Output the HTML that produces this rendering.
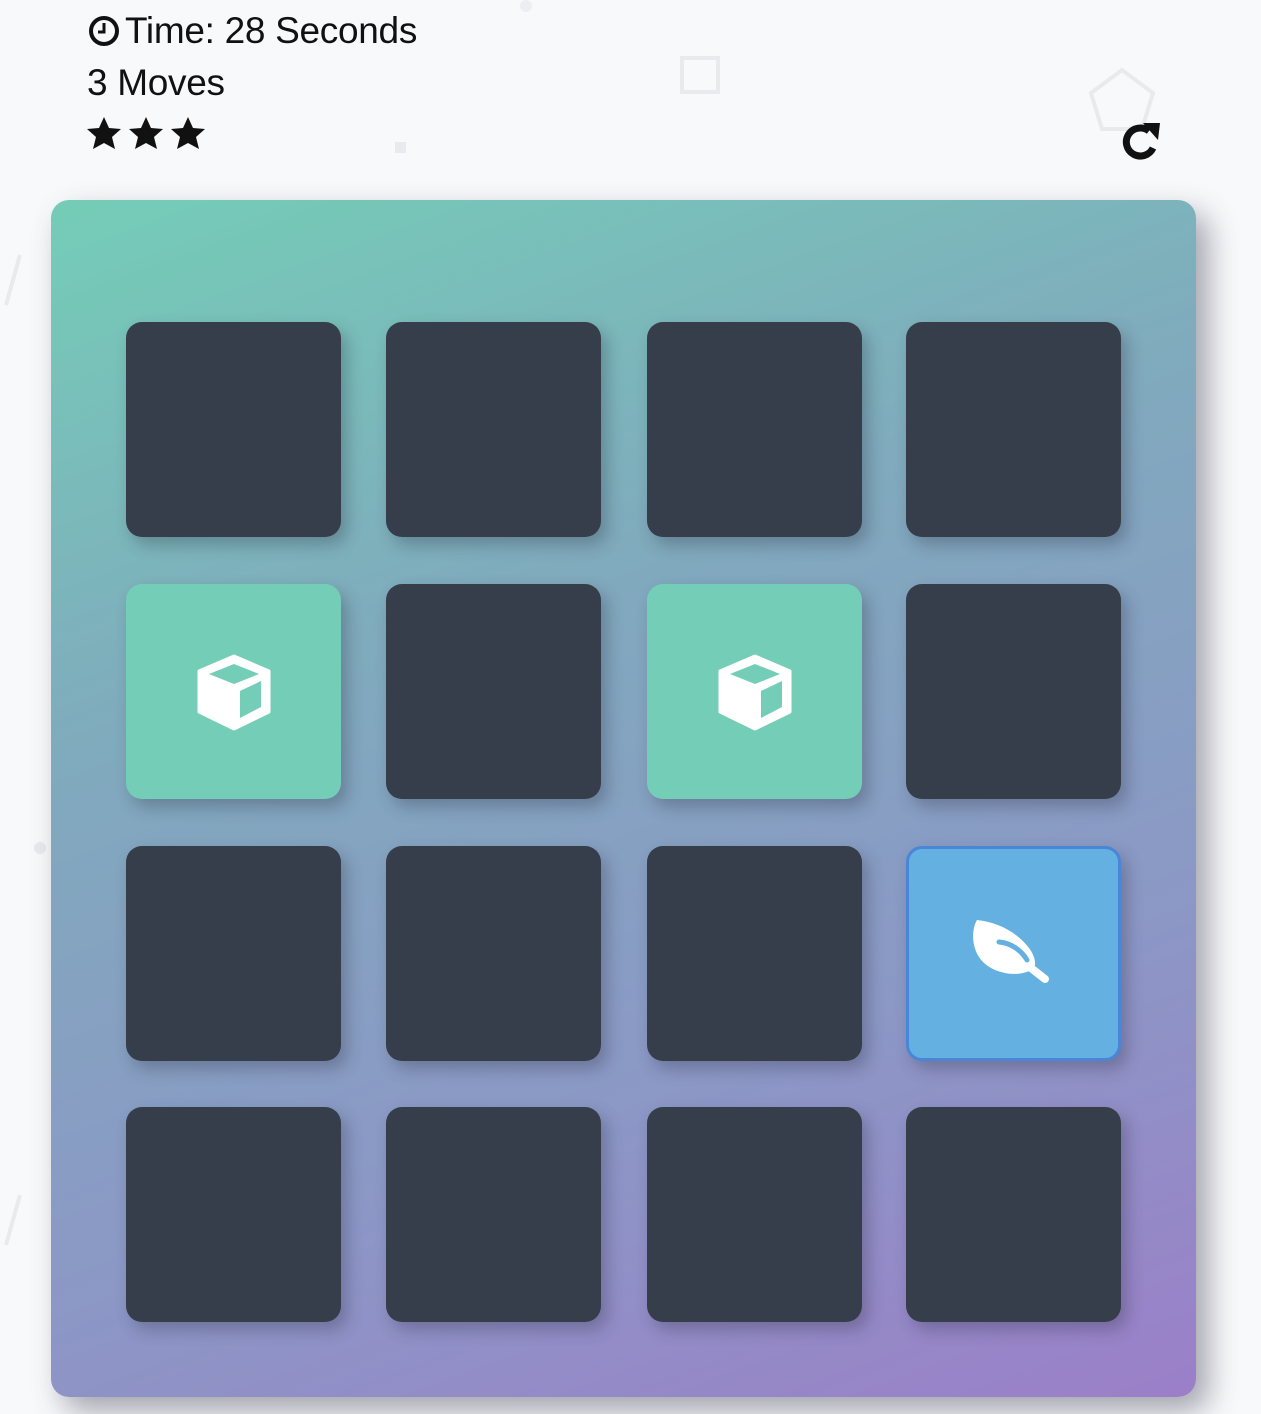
<!DOCTYPE html>
<html><head><meta charset="utf-8"><style>
*{margin:0;padding:0;box-sizing:border-box}
body{width:1261px;height:1414px;background:#f8f9fb;font-family:"Liberation Sans",sans-serif;position:relative;overflow:hidden;color:#111}
.hdr{position:absolute;left:87px;font-size:37px;letter-spacing:-0.3px}
.board{position:absolute;left:51px;top:200px;width:1145px;height:1197px;border-radius:18px;
background:linear-gradient(160deg,#74cdb7 0%,#80aabd 35%,#8c97c6 70%,#9b7fc8 100%);
box-shadow:12px 14px 30px rgba(60,60,80,.45)}
.card{position:absolute;width:215px;height:215px;border-radius:16px;background:#373e4b;box-shadow:6px 8px 16px rgba(40,40,60,.3);display:flex;align-items:center;justify-content:center}
.g{background:#74cdb7}
.b{background:#63b0e1;border:3px solid #4a86d6}
.bg{position:absolute;color:#e6e8ec}
</style></head><body>
<div class="bg" style="left:680px;top:56px;width:40px;height:38px;border:4px solid #e8eaee"></div>
<div class="bg" style="left:395px;top:142px;width:11px;height:11px;background:#e8eaee"></div>
<div class="bg" style="left:520px;top:0;width:12px;height:12px;border-radius:50%;background:#eceef2"></div>
<div class="bg" style="left:34px;top:842px;width:12px;height:12px;border-radius:50%;background:#e8eaee"></div>
<svg style="position:absolute;left:1085px;top:65px" width="75" height="70"><polygon points="37,5 68,28 57,64 17,64 6,28" fill="none" stroke="#e8eaee" stroke-width="4"/></svg>
<svg style="position:absolute;left:0;top:250px" width="30" height="60"><line x1="20" y1="5" x2="6" y2="55" stroke="#e8eaee" stroke-width="4"/></svg>
<svg style="position:absolute;left:0;top:1190px" width="30" height="60"><line x1="20" y1="5" x2="6" y2="55" stroke="#e8eaee" stroke-width="4"/></svg>

<div class="hdr" style="top:10px;display:flex;align-items:center"><svg width="34" height="34" viewBox="0 0 34 34" style="margin-right:4px"><circle cx="17" cy="17" r="13" fill="none" stroke="#111" stroke-width="4"/><path d="M17 9v9h-6" fill="none" stroke="#111" stroke-width="3"/></svg>Time: 28 Seconds</div>
<div class="hdr" style="top:62px">3 Moves</div>
<svg style="position:absolute;left:86px;top:116px" width="124" height="38" viewBox="0 0 124 38">
<g fill="#111"><path id="s" d="M18 1l5 11 12 1-9 8 3 12-11-6-11 6 3-12-9-8 12-1z"/><use href="#s" x="42"/><use href="#s" x="84"/></g></svg>
<svg style="position:absolute;left:1118px;top:120px" width="46" height="46" viewBox="0 0 46 46"><path d="M35 28A14 14 0 1 1 31 11" fill="none" stroke="#111" stroke-width="7"/><path d="M25 3l17 0-2 17z" fill="#111"/></svg>

<div class="board"></div>
<div class="card" style="left:126px;top:322px"></div>
<div class="card" style="left:386px;top:322px"></div>
<div class="card" style="left:647px;top:322px"></div>
<div class="card" style="left:906px;top:322px"></div>
<div class="card g" style="left:126px;top:584px"><svg width="78" height="78" viewBox="0 0 78 78"><path d="M39 3L74 18V59L39 76L4 59V18Z" fill="#fff" stroke="#fff" stroke-width="3" stroke-linejoin="round"/><path d="M39 11L64 21L39 31L14 21Z" fill="#74cdb7"/><path d="M45 38L66 28V54L45 65Z" fill="#74cdb7"/></svg></div>
<div class="card" style="left:386px;top:584px"></div>
<div class="card g" style="left:647px;top:584px"><svg width="78" height="78" viewBox="0 0 78 78"><path d="M39 3L74 18V59L39 76L4 59V18Z" fill="#fff" stroke="#fff" stroke-width="3" stroke-linejoin="round"/><path d="M39 11L64 21L39 31L14 21Z" fill="#74cdb7"/><path d="M45 38L66 28V54L45 65Z" fill="#74cdb7"/></svg></div>
<div class="card" style="left:906px;top:584px"></div>
<div class="card" style="left:126px;top:846px"></div>
<div class="card" style="left:386px;top:846px"></div>
<div class="card" style="left:647px;top:846px"></div>
<div class="card b" style="left:906px;top:846px"><svg width="90" height="70" viewBox="0 0 90 70" style="margin-top:-6px"><path d="M8 4C2 14 2 34 14 46C26 58 50 62 64 53C68 49 66 40 60 32C48 16 28 6 8 4Z" fill="#fff"/><path d="M30 26C42 27 52 34 58 44" stroke="#63b0e1" stroke-width="5" fill="none" stroke-linecap="round"/><path d="M62 52L76 63" stroke="#fff" stroke-width="8" stroke-linecap="round"/></svg></div>
<div class="card" style="left:126px;top:1107px"></div>
<div class="card" style="left:386px;top:1107px"></div>
<div class="card" style="left:647px;top:1107px"></div>
<div class="card" style="left:906px;top:1107px"></div>
</body></html>
